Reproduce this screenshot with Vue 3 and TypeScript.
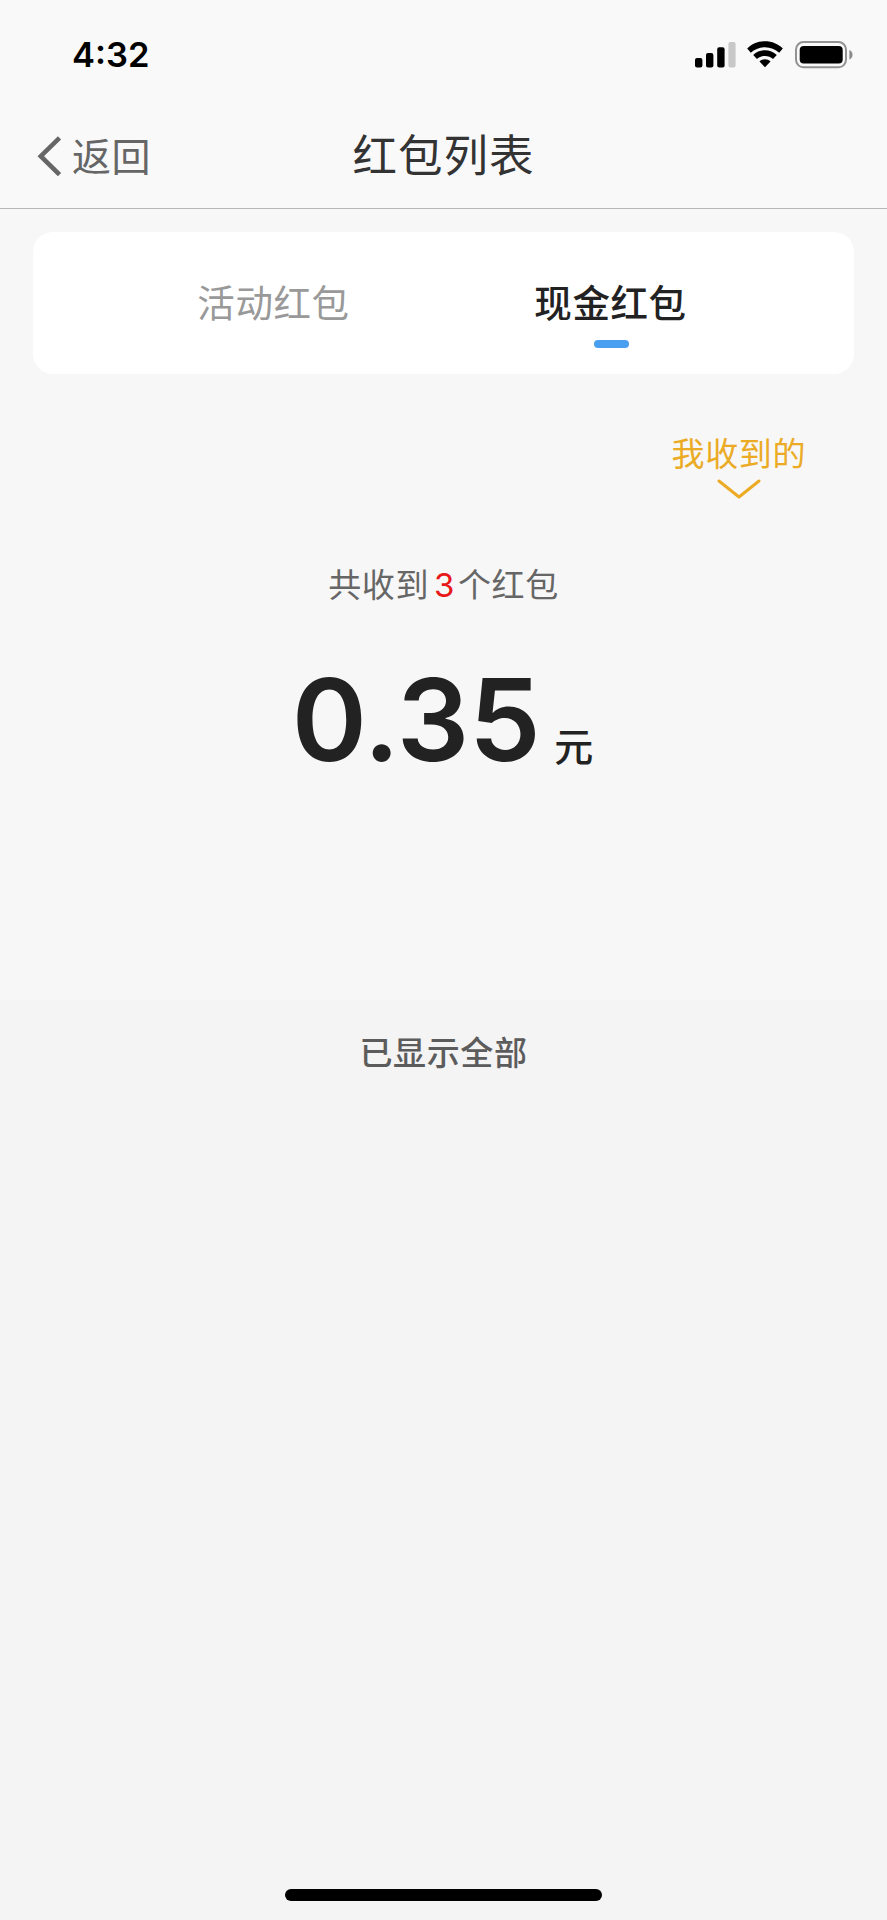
<script setup lang="ts">
import { ref } from 'vue'

interface Tab {
  id: string
  label: string
}

const tabs: Tab[] = [
  { id: 'activity', label: '活动红包' },
  { id: 'cash', label: '现金红包' },
]
const active = ref('cash')
const count = 3
const amount = '0.35'
</script>

<template>
  <div class="screen">
    <header class="top">
      <div class="status">
        <span class="clock">4:32</span>
        <div class="status-icons">
          <svg class="signal" width="41" height="26" viewBox="0 0 41 26">
            <rect x="0" y="16" width="7.4" height="9.5" rx="2" />
            <rect x="11" y="11" width="7.4" height="14.5" rx="2" />
            <rect x="22.2" y="5.2" width="7.4" height="20.3" rx="2" />
            <rect x="33.4" y="0" width="7.2" height="25.5" rx="2" fill="#c8c8c8" />
          </svg>
          <svg class="wifi" width="36" height="27" viewBox="0 0 36 27">
            <path d="M18 .3C11 .3 4.800 3 .2 7.500L3.800 11.700C7.600 8.300 12.500 6.200 18 6.200S28.400 8.300 32.200 11.700L35.800 7.500C31.200 3 25 .3 18 .3Z" />
            <path d="M18 9.300C13.400 9.300 9.400 11 6.200 13.900L10 17.900C12.100 16 14.900 14.900 18 14.900S23.900 16 26 17.900L29.800 13.900C26.600 11 22.600 9.300 18 9.300Z" />
            <path d="M18 18.200C16 18.200 14.100 18.900 12.500 20.500L18 26.300L23.500 20.500C21.900 18.900 20 18.200 18 18.200Z" />
          </svg>
          <svg class="battery" width="58" height="28" viewBox="0 0 58 28">
            <rect x="1" y="1" width="50" height="25.300" rx="7.500" fill="none" stroke="#929292" stroke-width="2" />
            <rect x="4.700" y="5" width="43" height="17.500" rx="4" />
            <path d="M54.400 9C58.600 10.500 58.600 17.200 54.400 18.500Z" fill="#8b8b8b" />
          </svg>
        </div>
      </div>
      <nav class="nav">
        <a class="back">
          <svg width="25" height="40" viewBox="0 0 25 40"><path d="M22.500 1.800L3.800 20.200L22.500 38.600" fill="none" stroke="#666" stroke-width="4.600" /></svg>
          <span>返回</span>
        </a>
        <h1 class="title">红包列表</h1>
      </nav>
    </header>

    <main class="content">
      <div class="tabs">
        <button
          v-for="tab in tabs"
          :key="tab.id"
          class="tab"
          :class="{ active: tab.id === active }"
          @click="active = tab.id"
        >
          <span class="tab-label">{{ tab.label }}</span>
          <i class="tab-line"></i>
        </button>
      </div>

      <div class="filter">
        <span class="filter-label">我收到的</span>
        <svg width="44" height="21" viewBox="0 0 44 21"><path d="M2 2L22 18L42 2" fill="none" stroke="#ebab24" stroke-width="3" stroke-linecap="round" stroke-linejoin="round" /></svg>
      </div>

      <p class="summary">共收到<b class="count">{{ count }}</b>个红包</p>
      <p class="total"><span class="amount">{{ amount }}</span><span class="unit">元</span></p>
    </main>

    <footer class="end">
      <p class="end-text">已显示全部</p>
      <div class="home"></div>
    </footer>
  </div>
</template>

<style>
body {
  margin: 0;
  background: #f4f4f4;
}
</style>

<style scoped>
.screen {
  width: 887px;
  height: 1920px;
  overflow: hidden;
  display: flex;
  flex-direction: column;
  background: #f4f4f4;
  font-family: Inter, 'Noto Sans CJK SC', sans-serif;
}
h1, p {
  margin: 0;
  font-weight: 400;
}
.top {
  box-sizing: border-box;
  height: 209px;
  background: #f9f9f9;
  border-bottom: 1px solid #b7b7b7;
}
.status {
  box-sizing: border-box;
  height: 109px;
  padding: 0 34px 0 72px;
  display: flex;
  justify-content: space-between;
}
.clock {
  font-size: 34.5px;
  line-height: 109px;
  font-weight: 600;
  color: #000;
}
.status-icons {
  display: flex;
  align-items: flex-start;
  padding-top: 41px;
}
.signal {
  margin-top: 1px;
}
.wifi {
  margin-left: 11px;
}
.battery {
  margin-left: 12px;
}
.nav {
  height: 99px;
  padding: 0 37px;
  display: grid;
  grid-template-columns: 1fr auto 1fr;
}
.back {
  display: flex;
  align-items: flex-start;
  font-size: 39px;
  line-height: 60px;
  letter-spacing: 0.6px;
  color: #666;
}
.back svg {
  margin: 27px 10px 0 0;
}
.back span {
  margin-top: 18px;
}
.title {
  font-size: 44.5px;
  line-height: 60px;
  margin-top: 17px;
  letter-spacing: 1px;
  color: #333;
}
.content {
  box-sizing: border-box;
  height: 791px;
  background: #f7f7f7;
  padding: 23px 33px 0;
  display: flex;
  flex-direction: column;
}
.tabs {
  box-sizing: border-box;
  height: 142px;
  padding: 0 74px 0 73px;
  border-radius: 20px;
  background: #fff;
  display: grid;
  grid-template-columns: 1fr 1fr;
}
.tab {
  border: 0;
  padding: 44px 0 0;
  background: none;
  font: inherit;
  display: flex;
  flex-direction: column;
  align-items: center;
  color: #999;
}
.tab-label {
  font-size: 37.5px;
  line-height: 56px;
  letter-spacing: 0.6px;
  margin-right: 2px;
}
.tab-line {
  width: 35px;
  height: 8px;
  margin-top: 8px;
  border-radius: 4px;
}
.active {
  color: #222;
}
.active .tab-label {
  font-weight: 500;
}
.active .tab-line {
  background: #4a9ff0;
}
.filter {
  align-self: flex-end;
  margin: 55px 48px 0 0;
  display: flex;
  flex-direction: column;
  align-items: center;
}
.filter-label {
  font-size: 33px;
  line-height: 50px;
  letter-spacing: 0.6px;
  color: #ebab24;
}
.summary {
  margin-top: 60px;
  text-align: center;
  font-size: 33px;
  line-height: 50px;
  letter-spacing: 0.6px;
  color: #666;
}
.count {
  margin: 0 3px 0 5px;
  font-size: 33px;
  font-weight: 400;
  color: #e81818;
}
.total {
  margin: 42px 2px 0 0;
  display: flex;
  justify-content: center;
  align-items: baseline;
  line-height: 136px;
  color: #222;
}
.amount {
  font-size: 114px;
  font-weight: 600;
  letter-spacing: -0.3px;
}
.unit {
  margin-left: 14px;
  font-size: 39px;
  font-weight: 500;
}
.end {
  flex: 1;
  display: flex;
  flex-direction: column;
  align-items: center;
  justify-content: space-between;
}
.end-text {
  margin-top: 28px;
  font-size: 33px;
  font-weight: 500;
  line-height: 50px;
  letter-spacing: 0.6px;
  color: #5c5c5c;
}
.home {
  width: 317px;
  height: 12px;
  margin-bottom: 19px;
  border-radius: 6px;
  background: #000;
}
</style>
